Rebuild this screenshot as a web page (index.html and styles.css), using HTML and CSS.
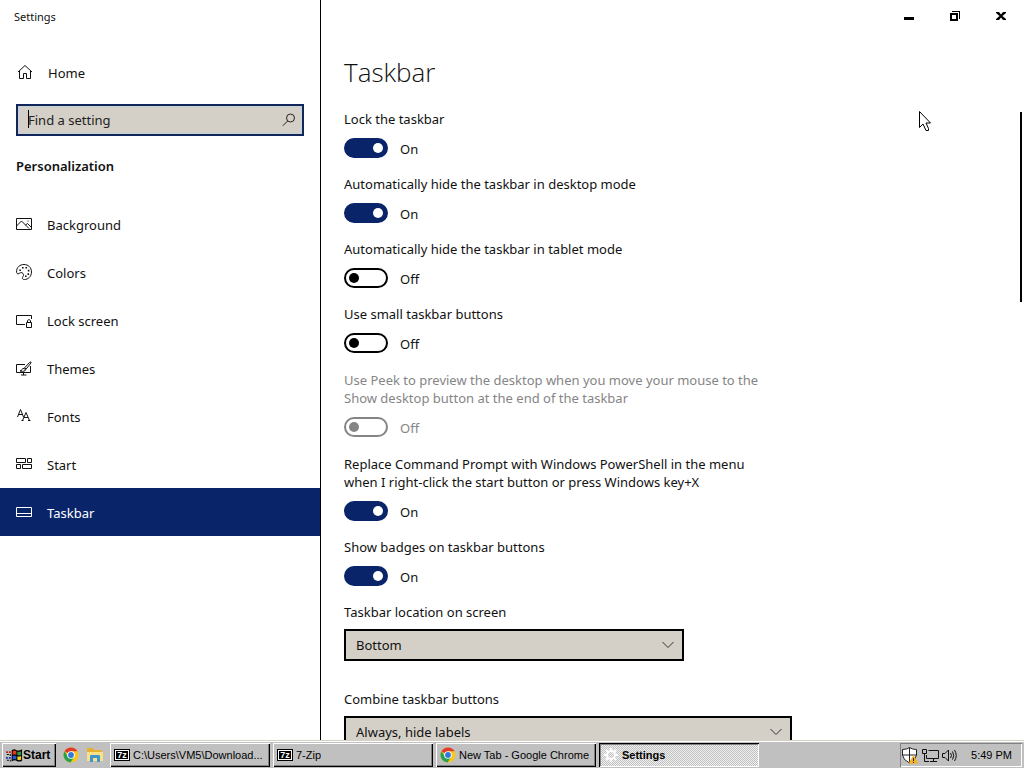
FILE: index.html
```html
<!DOCTYPE html>
<html lang="en">
<head>
<meta charset="utf-8">
<title>Settings</title>
<link rel="stylesheet" href="styles.css">
</head>
<body>
<div class="window">
  <aside class="sidebar">
    <div class="window-title">Settings</div>
    <a class="nav-link home" href="#home">
      <svg class="icon" viewBox="0 0 16 16"><path d="M2 8L9 1.500L16 8M3.500 7V14.500H7.500V9.500H10.500V14.500H14.500V7"/></svg>
      <span>Home</span>
    </a>
    <div class="search">
      <input class="search-input" type="text" placeholder="Find a setting" aria-label="Find a setting">
      <span class="caret"></span>
      <svg class="search-icon" viewBox="0 0 14 14"><circle cx="8.500" cy="5" r="4"/><path d="M5.600 8L.8 12.800"/></svg>
    </div>
    <h2 class="category">Personalization</h2>
    <nav class="nav">
      <a class="nav-link" href="#background">
        <svg class="icon" viewBox="0 0 16 16"><path d="M.5 2.500H15.500V13.500H.5ZM.5 10L5.500 5L13 12.500M9.500 9L11.500 7.500L15.500 11.500M11.500 5H12.500"/></svg>
        <span>Background</span>
      </a>
      <a class="nav-link" href="#colors">
        <svg class="icon" viewBox="0 0 16 16"><path d="M.6 8C.3 3.500 3.800.5 8 .5C12.200.5 15.500 3.500 15.500 8C15.500 12.500 12 15.500 8.500 15.500C6 15.500 6 13.800 7 12.500C8 11 7.500 9.500 6 8.800C4 7.800 3.500 10 2 9.800C1 9.700.7 9 .6 8Z"/><path class="dots" d="M3.300 5.500h1.600v1.600H3.300ZM6 3h1.600v1.600H6ZM9.500 3h1.600v1.600H9.500ZM11.800 5.800h1.600v1.600h-1.600ZM11.500 9.300h1.600v1.600h-1.600ZM9 11.500h1.600v1.600H9Z"/></svg>
        <span>Colors</span>
      </a>
      <a class="nav-link" href="#lock-screen">
        <svg class="icon" viewBox="0 0 16 16"><path d="M9 12.500H.5V3.500H15.500V7M10.500 10.500H15.500V15.500H10.500ZM11.500 10.500V8.500Q13 6.500 14.500 8.500V10.500"/></svg>
        <span>Lock screen</span>
      </a>
      <a class="nav-link" href="#themes">
        <svg class="icon" viewBox="0 0 16 16"><path d="M9 4.500H.5V12.500H14.500V6M7.500 12.500V15M5 15H10.500M8 8.500L13.500 2.500Q15.500 1 15 3L9.500 9.800M8 8.500L9.500 9.800Q9 12 4 11Q6 10.500 6 9.500Q6.500 8 8 8.500M9 8L10 9"/></svg>
        <span>Themes</span>
      </a>
      <a class="nav-link" href="#fonts">
        <svg class="icon" viewBox="0 0 16 16"><path d="M1.500 9L4.500 1.500L7.500 9M2.500 6.500H6.500M6.500 12.500L10 4.500L13.500 12.500M8 9.500H12M5.500 12.500H7.500M12 12.500H14.500"/></svg>
        <span>Fonts</span>
      </a>
      <a class="nav-link" href="#start">
        <svg class="icon" viewBox="0 0 16 16"><path d="M.5 2.500H9.500V6.500H.5ZM11.500 2.500H15.500V6.500H11.500ZM.5 8.500H4.500V12.500H.5ZM6.500 8.500H15.500V12.500H6.500Z"/></svg>
        <span>Start</span>
      </a>
      <a class="nav-link active" href="#taskbar" aria-current="page">
        <svg class="icon" viewBox="0 0 16 16"><path d="M.5 3.500H15.500V12.500H.5ZM.5 9.500H15.500"/></svg>
        <span>Taskbar</span>
      </a>
    </nav>
  </aside>

  <main class="content">
    <div class="window-controls">
      <button class="window-button" type="button" aria-label="Minimize"><svg viewBox="0 0 10 10"><path d="M0 6h10v3H0Z"/></svg></button>
      <button class="window-button" type="button" aria-label="Restore"><svg viewBox="0 0 10 10"><path fill-rule="evenodd" d="M0 2h8v8H0ZM2 4v4h4V4ZM2 0h8v8H9V1H2Z"/></svg></button>
      <button class="window-button" type="button" aria-label="Close"><svg viewBox="0 0 10 10"><path d="M0 1h3l2 2.500L7 1h3v1L6.500 5L10 8v1H7L5 6.500L3 9H0V8l3.500-3L0 2Z"/></svg></button>
    </div>
    <div class="page">
      <h1 class="page-title">Taskbar</h1>

      <div class="setting">
        <label for="lock">Lock the taskbar</label>
        <div class="toggle-row"><input class="toggle" type="checkbox" role="switch" id="lock" checked><span>On</span></div>
      </div>
      <div class="setting">
        <label for="hide-desktop">Automatically hide the taskbar in desktop mode</label>
        <div class="toggle-row"><input class="toggle" type="checkbox" role="switch" id="hide-desktop" checked><span>On</span></div>
      </div>
      <div class="setting">
        <label for="hide-tablet">Automatically hide the taskbar in tablet mode</label>
        <div class="toggle-row"><input class="toggle" type="checkbox" role="switch" id="hide-tablet"><span>Off</span></div>
      </div>
      <div class="setting">
        <label for="small">Use small taskbar buttons</label>
        <div class="toggle-row"><input class="toggle" type="checkbox" role="switch" id="small"><span>Off</span></div>
      </div>
      <div class="setting long disabled">
        <label for="peek">Use Peek to preview the desktop when you move your mouse to the Show desktop button at the end of the taskbar</label>
        <div class="toggle-row"><input class="toggle" type="checkbox" role="switch" id="peek" disabled><span>Off</span></div>
      </div>
      <div class="setting long">
        <label for="powershell">Replace Command Prompt with Windows PowerShell in the menu when I right-click the start button or press Windows key+X</label>
        <div class="toggle-row"><input class="toggle" type="checkbox" role="switch" id="powershell" checked><span>On</span></div>
      </div>
      <div class="setting">
        <label for="badges">Show badges on taskbar buttons</label>
        <div class="toggle-row"><input class="toggle" type="checkbox" role="switch" id="badges" checked><span>On</span></div>
      </div>
      <div class="choice">
        <label for="location">Taskbar location on screen</label>
        <div class="select-box narrow">
          <select id="location"><option>Bottom</option><option>Top</option><option>Left</option><option>Right</option></select>
          <svg class="chevron" viewBox="0 0 12 8"><path d="M.5 1L6 6.500L11.500 1"/></svg>
        </div>
      </div>
      <div class="choice">
        <label for="combine">Combine taskbar buttons</label>
        <div class="select-box">
          <select id="combine"><option>Always, hide labels</option><option>Never</option></select>
          <svg class="chevron" viewBox="0 0 12 8"><path d="M.5 1L6 6.500L11.500 1"/></svg>
        </div>
      </div>
    </div>
    <div class="scroll-thumb"></div>
    <svg class="pointer" viewBox="0 0 13 21"><path d="M1.500 1.500V17.500L5 14L8 20.500H10.500V18.500L8 13H12.500Z"/></svg>
  </main>
</div>

<footer class="taskbar">
  <button class="task start" type="button">
    <svg class="flag" viewBox="0 0 18 16">
      <path d="M6 3Q9 1 11 3Q14 4 17 2V14Q14 16 11 14Q9 13 6 15Z" fill="#000"/>
      <path d="M7 4Q9 2.500 11 4V8Q9 6.500 7 8Z" fill="#e8381c"/><path d="M12 4.500Q14 5 16 4V8Q14 9 12 8Z" fill="#28a050"/>
      <path d="M7 9Q9 8 11 9V13Q9 11.500 7 13Z" fill="#2858d8"/><path d="M12 9.500Q14 10 16 9V13Q14 14 12 13Z" fill="#f0d020"/>
      <path d="M0 4h2v2H0ZM3 4h2v2H3Z" fill="#c02020"/><path d="M1 7h2v1H1ZM4 7h1v2H4Z" fill="#000"/><path d="M0 10h2v2H0ZM3 10h2v2H3Z" fill="#2030b0"/><path d="M1 13h2v1H1ZM4 13h1v2H4Z" fill="#000"/>
    </svg>
    <span>Start</span>
  </button>
  <div class="quick-launch">
    <button class="quick" type="button" aria-label="Google Chrome">
      <svg viewBox="0 0 16 16"><circle cx="8" cy="8" r="7.500" fill="#f8c818"/><path d="M8 8L1.500 4.250A7.500 7.500 0 0 1 14.500 4.250H8Z" fill="#e03c2c"/><path d="M1.500 4.250A7.500 7.500 0 0 0 7.600 15.500L11 10L5 9.700Z" fill="#28a050"/><circle cx="8" cy="8" r="3.800" fill="#fff"/><circle cx="8" cy="8" r="2.900" fill="#3078e0"/></svg>
    </button>
    <button class="quick" type="button" aria-label="File Explorer">
      <svg viewBox="0 0 16 16"><path d="M0 1h6l1 2h8v11H0Z" fill="#e8b030"/><path d="M0 5h16v9H0Z" fill="#fbe08a"/><path d="M3 15V9q0-1 1-1h8q1 0 1 1v6h-3v-4H6v4Z" fill="#3c98cc"/></svg>
    </button>
  </div>
  <div class="tasks">
    <button class="task" type="button"><span class="zip-icon">7z</span><span class="task-label">C:\Users\VM5\Download...</span></button>
    <button class="task" type="button"><span class="zip-icon">7z</span><span class="task-label">7-Zip</span></button>
    <button class="task" type="button">
      <svg class="task-icon" viewBox="0 0 16 16"><circle cx="8" cy="8" r="7.500" fill="#f8c818"/><path d="M8 8L1.500 4.250A7.500 7.500 0 0 1 14.500 4.250H8Z" fill="#e03c2c"/><path d="M1.500 4.250A7.500 7.500 0 0 0 7.600 15.500L11 10L5 9.700Z" fill="#28a050"/><circle cx="8" cy="8" r="3.800" fill="#fff"/><circle cx="8" cy="8" r="2.900" fill="#3078e0"/></svg>
      <span class="task-label">New Tab - Google Chrome</span>
    </button>
    <button class="task pressed" type="button" aria-pressed="true">
      <svg class="task-icon" viewBox="0 0 16 16"><circle cx="8" cy="8" r="4" fill="none" stroke="#fff" stroke-width="2"/><path d="M8 1v3M8 12v3M1 8h3M12 8h3M3 3l2 2M11 11l2 2M13 3l-2 2M5 11l-2 2" stroke="#fff" stroke-width="2"/></svg>
      <span class="task-label">Settings</span>
    </button>
  </div>
  <div class="tray">
    <svg class="tray-icon" viewBox="0 0 17 17"><path d="M7.500 .5Q10 2.500 14.500 2.500V8Q14 13 7.500 16Q1 13 .5 8V2.500Q5 2.500 7.500 .5Z" fill="#fff" stroke="#222"/><path d="M7.500 1V16M.5 8H14.500" stroke="#222"/><path d="M11.500 8L16.500 16.500H6.500Z" fill="#f8b020"/><path d="M11.500 11v3M11.500 15v1" stroke="#222"/></svg>
    <svg class="tray-icon" viewBox="0 0 17 17"><path d="M6.500 3.500H16.500V11.500H4.500V8M11.500 11.500V14.500M8 14.500H15M.5 2.500H4.500V6.500H.5ZM2.500 6.500V14.500H7" fill="none" stroke="#111"/></svg>
    <svg class="tray-icon" viewBox="0 0 17 17"><path d="M.5 6.500H3L6.500 3V14L3 10.500H.5ZM8.500 6Q10.500 8.500 8.500 11M10.500 4.500Q13 8.500 10.500 12.500M12.500 3Q16 8.500 12.500 14" fill="none" stroke="#111"/></svg>
    <time class="clock">5:49 PM</time>
  </div>
</footer>
</body>
</html>
```
FILE: styles.css
```css
* { box-sizing: border-box; }

body {
  margin: 0;
  height: 100vh;
  display: flex;
  flex-direction: column;
  overflow: hidden;
  background: #fff;
  color: #111;
  font: 13px/18px "Noto Sans", "Open Sans", sans-serif;
}

button, input, select { font: inherit; color: inherit; }

.window { flex: 1; min-height: 0; display: flex; }

.sidebar {
  flex: 0 0 321px;
  border-right: 1px solid #000;
}

.window-title {
  height: 48px;
  padding: 8px 14px;
  font-size: 11px;
}

.nav-link {
  display: flex;
  align-items: center;
  gap: 15px;
  height: 48px;
  padding: 0 16px;
  color: inherit;
  text-decoration: none;
}
.nav-link span { padding-top: 2px; }
.nav-link.home { gap: 16px; }
.nav-link.active { background: #0a246a; color: #fff; }

.icon {
  width: 16px;
  height: 16px;
  fill: none;
  stroke: currentColor;
}
.icon .dots { fill: currentColor; stroke: none; }

.search { position: relative; margin: 8px 16px 0; }
.search-input {
  display: block;
  width: 100%;
  height: 32px;
  padding: 0 32px 0 10px;
  border: 2px solid #13265c;
  border-radius: 0;
  outline: 0;
  background: #d4d0c8;
  box-shadow: inset 0 0 0 1px #c4d3d8;
}
.search-input::placeholder { color: #222; opacity: 1; }
.caret {
  position: absolute;
  top: 6px;
  left: 12px;
  width: 1px;
  height: 18px;
  background: #000;
}
.search-icon {
  position: absolute;
  top: 9px;
  right: 8px;
  width: 14px;
  height: 14px;
  fill: none;
  stroke: #222;
}

.category {
  margin: 21px 16px 25px;
  font-size: 13px;
  line-height: 18px;
  font-weight: 600;
}

.content {
  position: relative;
  flex: 1;
  min-width: 0;
  overflow: hidden;
}

.window-controls { display: flex; justify-content: flex-end; height: 32px; }
.window-button {
  display: grid;
  place-items: center;
  width: 46px;
  padding: 0;
  border: 0;
  background: none;
}
.window-button svg { width: 10px; height: 10px; fill: #000; }

.page { max-width: 471px; padding: 22px 0 0 23px; }
.page-title {
  margin: 0 0 20px;
  font-family: "Open Sans", "Noto Sans", sans-serif;
  font-size: 26px;
  line-height: 36px;
  font-weight: 300;
}

.setting {
  display: flex;
  flex-direction: column;
  gap: 10px;
  max-width: 428px;
  padding-bottom: 17px;
}
.setting.long { padding-top: 1px; }
.disabled { color: #858585; }

.toggle-row { display: flex; align-items: center; gap: 12px; height: 20px; }
.toggle-row span { padding-top: 2px; }
.toggle {
  appearance: none;
  display: flex;
  align-items: center;
  width: 44px;
  height: 20px;
  margin: 0;
  padding: 3px;
  border: 2px solid #000;
  border-radius: 10px;
}
.toggle::before {
  content: "";
  width: 10px;
  height: 10px;
  border-radius: 50%;
  background: #000;
}
.toggle:checked {
  justify-content: flex-end;
  border-color: #0a246a;
  background: #0a246a;
}
.toggle:checked::before { background: #fff; }
.toggle:disabled { border-color: #858585; }
.toggle:disabled::before { background: #858585; }

.choice {
  display: flex;
  flex-direction: column;
  gap: 8px;
  padding-bottom: 29px;
}
.select-box { position: relative; }
.select-box.narrow { max-width: 340px; }
.select-box select {
  appearance: none;
  display: block;
  width: 100%;
  height: 32px;
  padding: 0 32px 0 10px;
  border: 2px solid #000;
  border-radius: 0;
  background: #d4d0c8;
}
.chevron {
  position: absolute;
  top: 12px;
  right: 10px;
  width: 12px;
  height: 8px;
  fill: none;
  stroke: #333;
  pointer-events: none;
}

.scroll-thumb {
  position: absolute;
  top: 112px;
  right: 2px;
  width: 2px;
  height: 190px;
  background: #000;
}
.pointer {
  position: absolute;
  top: 110px;
  right: 93px;
  width: 13px;
  height: 21px;
  fill: #fff;
  stroke: #000;
}

.taskbar {
  display: flex;
  gap: 7px;
  height: 28px;
  padding: 2px 2px 1px;
  border-top: 1px solid #d4d0c8;
  background: #c0c0c0;
  box-shadow: inset 0 1px #fff;
  color: #000;
  font: 11px/16px "Liberation Sans", Arial, sans-serif;
}
.task {
  display: flex;
  align-items: center;
  gap: 3px;
  flex: 0 1 160px;
  min-width: 0;
  padding: 0 4px;
  border: 0;
  background: #c0c0c0;
  box-shadow: inset 1px 1px #fff, inset -1px -1px #000, inset -2px -2px #808080;
  white-space: nowrap;
}
.task-label { overflow: hidden; }
.task.start { flex: 0 0 54px; gap: 0; font-size: 12px; font-weight: 700; }
.task.pressed {
  background: repeating-conic-gradient(#f0f0f0 0 25%, #c0c0c0 0 50%) 0 0 / 2px 2px;
  box-shadow: inset 1px 1px #000, inset -1px -1px #fff, inset 2px 2px #808080;
  font-weight: 700;
}
.flag { flex: none; width: 17px; height: 16px; }
.task-icon { flex: none; width: 16px; height: 16px; }
.zip-icon {
  flex: none;
  width: 16px;
  height: 12px;
  border: 1px solid #000;
  outline: 1px solid #fff;
  outline-offset: -2px;
  background: #000;
  color: #fff;
  font-size: 9px;
  line-height: 10px;
  font-weight: 700;
  text-align: center;
}

.quick-launch { display: flex; align-items: center; gap: 8px; }
.quick { width: 16px; height: 16px; padding: 0; border: 0; background: none; }
.quick svg { display: block; width: 16px; height: 16px; }
.tasks { display: flex; flex: 1; min-width: 0; gap: 3px; }

.tray {
  display: flex;
  align-items: center;
  gap: 3px;
  flex: 0 0 122px;
  padding: 0 10px 0 2px;
  box-shadow: inset 1px 1px #808080, inset -1px -1px #fff;
}
.tray-icon { width: 17px; height: 17px; }
.clock { margin-left: auto; }
```
